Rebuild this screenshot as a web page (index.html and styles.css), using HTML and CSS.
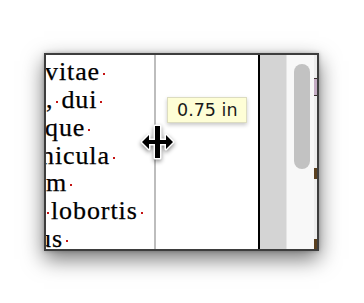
FILE: index.html
```html
<!DOCTYPE html>
<html>
<head>
<meta charset="utf-8">
<link rel="stylesheet" href="styles.css">
</head>
<body>
<div class="frame">
  <div class="doc">
    <div class="text">
      <div class="line cut1">vitae<i class="sp"></i></div>
      <div class="line">,<i class="sp"></i>dui<i class="sp"></i></div>
      <div class="line cut1">que<i class="sp"></i></div>
      <div class="line cutm">nicula<i class="sp"></i></div>
      <div class="line">m<i class="sp"></i></div>
      <div class="line"><i class="sp lead"></i>lobortis<i class="sp"></i></div>
      <div class="line cutn">us<i class="sp"></i></div>
    </div>
    <div class="guide"></div>
  </div>
  <div class="edge"></div>
  <div class="gutter"></div>
  <div class="track"><div class="thumb"></div></div>
  <div class="strip">
    <div class="seg s1"></div>
    <div class="seg s2"></div>
    <div class="seg s3"></div>
    <div class="seg s4"></div>
    <div class="seg s5"></div>
    <div class="seg s6"></div>
  </div>
  <div class="tip">0.75 in</div>
  <svg class="cursor" width="36" height="36" viewBox="0 0 36 36">
    <g fill="#fff" stroke="#fff" stroke-width="3" stroke-linejoin="round">
      <rect x="15" y="2" width="5" height="32"/>
      <polygon points="2,18 9,11 9,16 26,16 26,11 33,18 26,25 26,20 9,20 9,25"/>
    </g>
    <g fill="#000">
      <rect x="15" y="2" width="5" height="32"/>
      <polygon points="2,18 9,11 9,16 26,16 26,11 33,18 26,25 26,20 9,20 9,25"/>
    </g>
  </svg>
</div>
</body>
</html>
```
FILE: styles.css
```css
html, body {
  margin: 0;
  padding: 0;
  background: #ffffff;
}
body {
  width: 364px;
  height: 303px;
  overflow: hidden;
  padding-top: 53px;
  padding-left: 44px;
  box-sizing: border-box;
}
.frame {
  position: relative;
  display: flex;
  width: 271px;
  height: 194px;
  border: 2px solid #3d3d3d;
  box-shadow: 0 8px 20px rgba(0, 0, 0, 0.55), 0 0 4px rgba(0, 0, 0, 0.25);
  background: #fff;
}
.doc {
  position: relative;
  width: 212px;
  height: 194px;
  overflow: hidden;
  background: #fff;
}
.text {
  padding-top: 3.3px;
  font-family: "Liberation Serif", "Times New Roman", serif;
  font-size: 26px;
  letter-spacing: 0.9px;
  line-height: 27.8px;
  color: #000;
  -webkit-text-stroke: 0.25px #000;
  white-space: nowrap;
}
.line.cut1 { margin-left: -1px; }
.line.cutm { margin-left: -5px; }
.line.cutn { margin-left: -8px; }
.sp {
  display: inline-block;
  width: 2px;
  height: 2px;
  margin: 0 3px 0 3px;
  background: #c41414;
  vertical-align: 5px;
}
.sp.lead {
  margin-left: 1px;
  margin-right: 2px;
}
.guide {
  position: absolute;
  left: 108px;
  top: 0;
  width: 2px;
  height: 194px;
  background: #bdbdbd;
}
.edge {
  width: 2px;
  background: #000;
}
.gutter {
  width: 26px;
  background: #d4d4d4;
}
.track {
  border-left: 1px solid #e6e6e6;
  background: #f8f8f8;
  padding: 9px 0 0 7px;
  box-sizing: border-box;
  width: 28px;
}
.thumb {
  width: 16px;
  height: 105px;
  border-radius: 8px;
  background: #c2c2c2;
}
.strip {
  width: 3px;
  display: flex;
  flex-direction: column;
  background: #ededed;
}
.seg { width: 3px; }
.s1 { height: 23px; }
.s2 { height: 16px; background: #c4adc4; border-top: 1px solid #3a3030; border-bottom: 1px solid #3a3030; }
.s3 { height: 73px; }
.s4 { height: 11px; background: #5a4020; }
.s5 { height: 60px; }
.s6 { height: 10px; background: #5a4020; }
.tip {
  position: absolute;
  left: 121px;
  top: 42px;
  width: 80px;
  height: 26px;
  box-sizing: border-box;
  padding-left: 9px;
  border: 1px solid #dcdcc0;
  background: #fefed6;
  box-shadow: 0 2px 4px rgba(0, 0, 0, 0.22);
  font-family: "DejaVu Sans", Verdana, sans-serif;
  font-size: 17.5px;
  line-height: 24px;
  color: #1a1a1a;
  white-space: nowrap;
}
.cursor {
  position: absolute;
  left: 94px;
  top: 69px;
  filter: drop-shadow(0 2px 2px rgba(0, 0, 0, 0.45));
}
```
